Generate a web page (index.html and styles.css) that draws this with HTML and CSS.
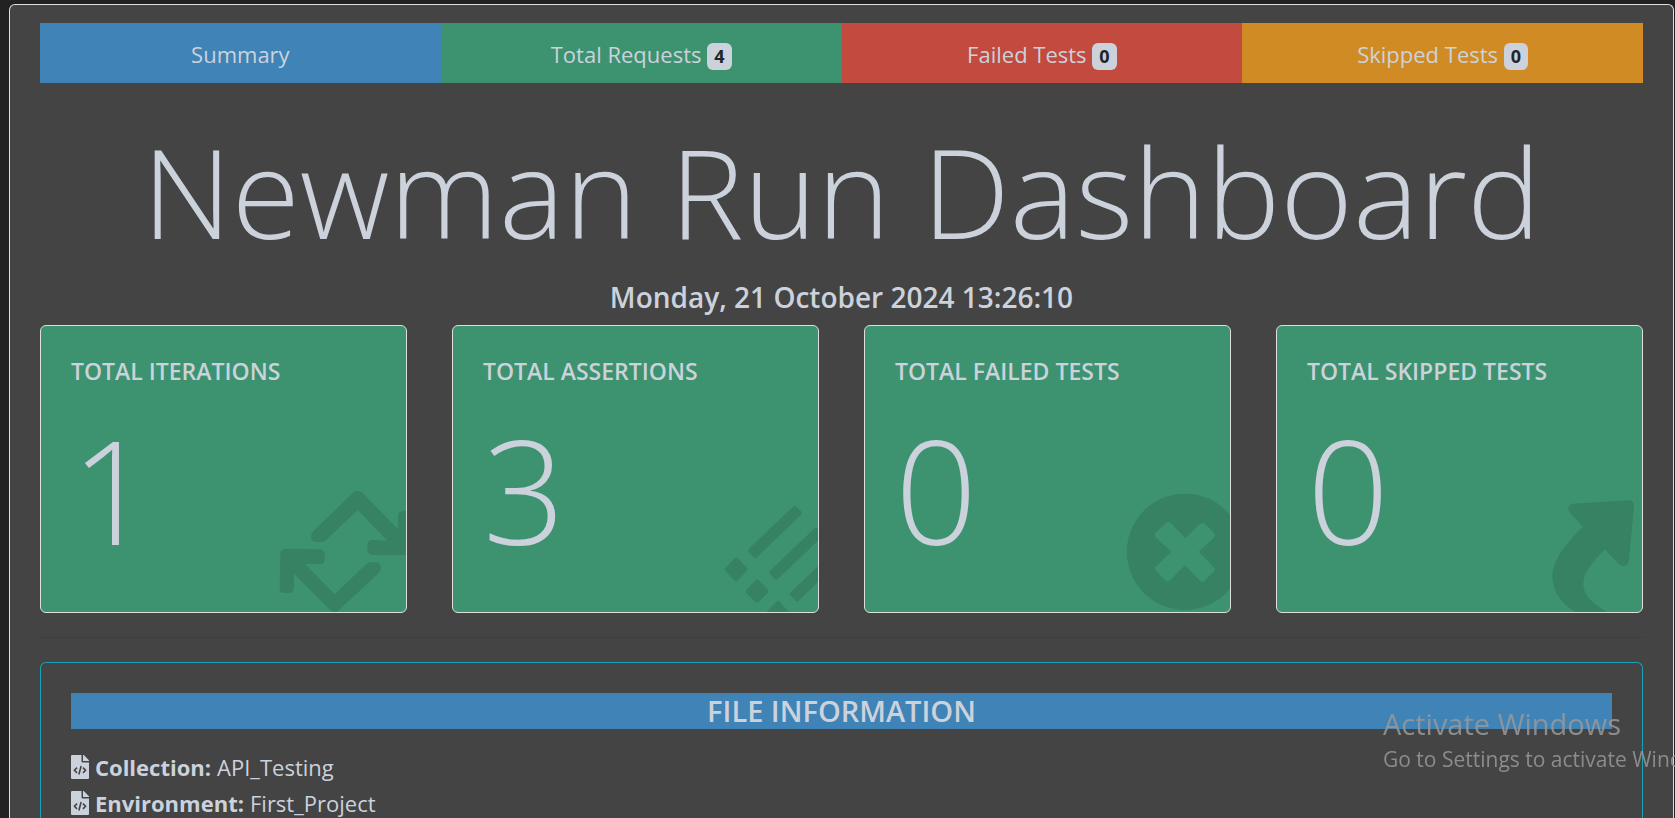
FILE: index.html
```html
<!DOCTYPE html>
<html lang="en">
<head>
<meta charset="utf-8">
<title>Newman Run Dashboard</title>
<meta name="viewport" content="width=device-width, initial-scale=1">
<link rel="stylesheet" href="styles.css">
</head>
<body>
<main class="page">
  <nav class="tabs">
    <a class="tab tab-summary" href="#summary">Summary</a>
    <a class="tab tab-requests" href="#requests">Total Requests <span class="badge">4</span></a>
    <a class="tab tab-failed" href="#failed">Failed Tests <span class="badge">0</span></a>
    <a class="tab tab-skipped" href="#skipped">Skipped Tests <span class="badge">0</span></a>
  </nav>

  <header class="hero">
    <h1 class="title">Newman Run Dashboard</h1>
    <p class="date">Monday, 21 October 2024 13:26:10</p>
  </header>

  <section class="stats">
    <article class="stat">
      <h2 class="stat-name">Total Iterations</h2>
      <p class="stat-value">1</p>
      <svg class="stat-icon" viewBox="828 516 390 390" aria-hidden="true">
        <g fill="currentColor">
          <path d="M1059 548Q1073 538 1087 548L1194 658 1225 735 1162 692 1073 600 978 690Q971 696 962 696H948Q933 694 933 680Q933 671 940 664Z"/>
          <path d="M860 735 915 762 1004 853 1098 763Q1105 757 1114 756H1128Q1143 759 1143 774Q1143 781 1137 788L1018 899Q1004 915 990 899L882 791Z"/>
          <path d="M857 717 958 718Q974 719 974 735V746Q974 762 958 762H915L882 791V833Q881 850 865 850L853 849Q838 848 839 833L841 732Q842 717 857 717Z"/>
          <path d="M1194 662V620Q1194 602 1212 602H1240V735H1118Q1102 733 1102 717V706Q1102 690 1118 690L1166 692Z"/>
        </g>
      </svg>
    </article>
    <article class="stat">
      <h2 class="stat-name">Total Assertions</h2>
      <p class="stat-value">3</p>
      <svg class="stat-icon" viewBox="774 516 390 390" aria-hidden="true">
        <g fill="currentColor" stroke="currentColor" stroke-width="14" stroke-linejoin="round">
          <path d="M962 721 1094 595 1108 609 976 737Z"/>
          <path d="M1025 787 1157 661 1171 675 1039 802Z"/>
          <path d="M1087 852 1219 726 1233 740 1101 867Z"/>
          <path d="M891 778 919 750 945 778 918 806Z"/>
          <path d="M954 844 982 816 1008 844 981 871Z"/>
          <path d="M1016 909 1044 880 1070 909 1043 936Z"/>
        </g>
      </svg>
    </article>
    <article class="stat">
      <h2 class="stat-name">Total Failed Tests</h2>
      <p class="stat-value">0</p>
      <svg class="stat-icon" viewBox="780 516 390 390" aria-hidden="true">
        <path fill="currentColor" fill-rule="evenodd" d="M1035 551A174 174 0 1 1 1035 900A174 174 0 1 1 1035 551ZM1036 685 993 640Q985 631 976 640L949 667Q940 675 949 684L994 725 949 768Q940 776 949 784L974 809Q983 818 991 809L1035 766 1078 811Q1087 820 1095 811L1121 786Q1128 778 1120 770L1076 725 1121 684Q1129 676 1121 668L1096 642Q1088 635 1079 643Z"/>
      </svg>
    </article>
    <article class="stat">
      <h2 class="stat-name">Total Skipped Tests</h2>
      <p class="stat-value">0</p>
      <svg class="stat-icon" viewBox="861 516 390 390" aria-hidden="true">
        <path fill="currentColor" d="M1044 581 1210 571Q1227 571 1227 588L1212 751Q1210 766 1197 768Q1188 770 1180 761L1140 718C1105 753 1075 787 1075 823C1075 858 1107 885 1150 908L1150 930H1080L1050 906C1010 882 982 842 982 800C982 748 1030 692 1074 650L1037 611Q1027 602 1031 591Q1035 582 1044 581Z"/>
      </svg>
    </article>
  </section>

  <hr class="rule">

  <section class="info">
    <h2 class="info-title">File Information</h2>
    <p class="info-row">
      <svg class="file-icon" viewBox="0 0 384 512" aria-hidden="true"><use href="#file-code"/></svg>
      <strong>Collection:</strong> API_Testing
    </p>
    <p class="info-row">
      <svg class="file-icon" viewBox="0 0 384 512" aria-hidden="true">
        <g id="file-code">
          <path fill="currentColor" d="M224 136V0H24Q0 0 0 24V488Q0 512 24 512H360Q384 512 384 488V160H248Q224 160 224 136ZM384 122V128H256V0H262Q272 0 279 7L377 105Q384 112 384 122Z"/>
          <path fill="none" stroke="#444" stroke-width="34" d="M128 270 74 326 128 382M256 270 310 326 256 382M216 236 168 416"/>
        </g>
      </svg>
      <strong>Environment:</strong> First_Project
    </p>
  </section>
</main>

<aside class="watermark">
  <p class="watermark-title">Activate Windows</p>
  <p class="watermark-text">Go to Settings to activate Windows.</p>
</aside>
</body>
</html>
```
FILE: styles.css
```css
* {
  box-sizing: border-box;
}

html {
  scrollbar-width: none;
}

body {
  margin: 0;
  padding: 4px 1px 0 9px;
  background: #222;
  color: #ccd2db;
  font-family: "Open Sans", "Noto Sans", sans-serif;
  font-size: 22px;
  line-height: 36px;
}

h1,
h2,
p {
  margin: 0;
}

.page {
  display: flex;
  flex-direction: column;
  min-height: calc(100vh - 4px);
  padding: 18px 30px 0;
  background: #444;
  border: 1px solid #dfdfdf;
  border-bottom: 0;
  border-radius: 6px 6px 0 0;
}

.tabs {
  display: grid;
  grid-template-columns: repeat(4, 1fr);
}

.tab {
  padding: 13px 12px 11px;
  color: inherit;
  text-align: center;
  text-decoration: none;
}

.tab-summary {
  background: #4083b7;
}

.tab-requests {
  background: #3d9370;
}

.tab-failed {
  background: #c24a3e;
}

.tab-skipped {
  background: #d18b24;
}

.badge {
  display: inline-block;
  padding: 4px 7px 5px;
  border-radius: 6px;
  background: #ccd2db;
  color: #212529;
  font-size: 18px;
  font-weight: 700;
  line-height: 18px;
}

.hero {
  padding: 23px 0 10px;
  text-align: center;
}

.title {
  font-size: 124px;
  font-weight: 300;
  line-height: 170px;
  white-space: nowrap;
}

.date {
  margin-top: 3px;
  font-size: 28px;
  font-weight: 600;
}

.stats {
  display: grid;
  grid-template-columns: repeat(4, 1fr);
  gap: 45px;
}

.stat {
  position: relative;
  overflow: hidden;
  height: 288px;
  padding: 30px;
  background: #3d9370;
  border: 1px solid #dfdfdf;
  border-radius: 6px;
}

.stat-name {
  font-size: 23px;
  font-weight: 600;
  line-height: 30px;
  text-transform: uppercase;
}

.stat-value {
  margin-top: 16px;
  font-size: 144px;
  font-weight: 300;
  line-height: 174px;
}

.stat-icon {
  position: absolute;
  right: 0;
  bottom: 0;
  width: 130px;
  height: 130px;
  color: #368263;
}

.rule {
  width: 100%;
  margin: 24px 0;
  border: 0;
  border-top: 1px solid #3d3d3d;
}

.info {
  flex: 1;
  padding: 30px 30px 0;
  border: 1px solid #17a2b8;
  border-bottom: 0;
  border-radius: 6px 6px 0 0;
}

.info-title {
  margin-bottom: 20px;
  background: #4083b7;
  font-size: 29px;
  font-weight: 600;
  text-align: center;
  text-transform: uppercase;
}

.info-row {
  display: flex;
  align-items: center;
  gap: 6px;
}

.file-icon {
  width: 18px;
  height: 24px;
}

.watermark {
  position: fixed;
  right: 0;
  bottom: 44px;
  width: 292px;
  overflow: hidden;
  color: #999;
  opacity: 0.85;
  white-space: nowrap;
}

.watermark-title {
  font-size: 29px;
  line-height: 40px;
}

.watermark-text {
  font-size: 21px;
  line-height: 30px;
}
```
